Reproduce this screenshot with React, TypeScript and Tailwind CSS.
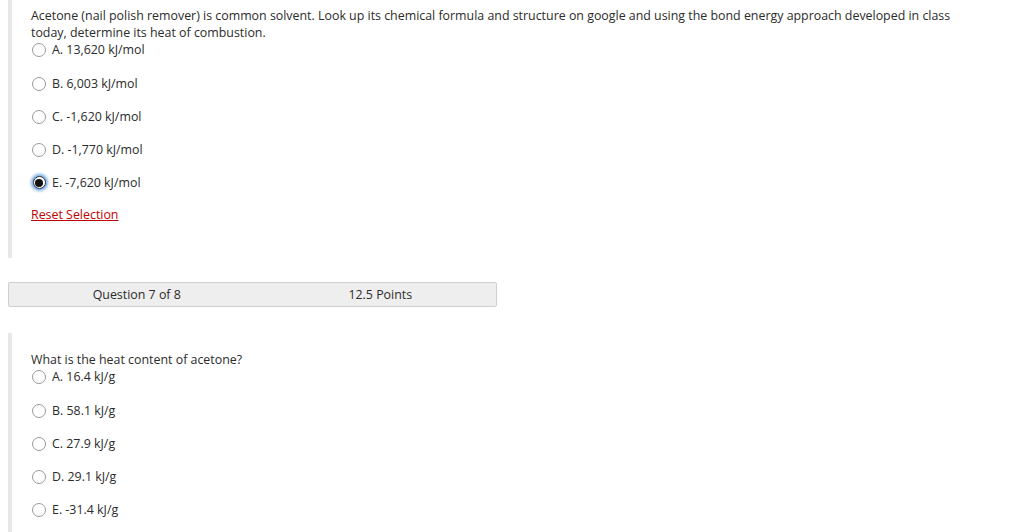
import React from "react";

function Radio({ checked }: { checked?: boolean }) {
  if (checked) {
    return (
      <span className="relative inline-flex h-[13px] w-[13px] shrink-0 items-center justify-center rounded-full border border-[#333] bg-white shadow-[0_0_3px_2px_rgba(70,140,220,0.75)]">
        <span className="h-[8px] w-[8px] rounded-full bg-[#111]" />
      </span>
    );
  }
  return (
    <span className="inline-block h-[14px] w-[14px] shrink-0 rounded-full border border-[#9a9a9a] bg-white" />
  );
}

function Option({ label, checked, idx }: { label: string; checked?: boolean; idx: number }) {
  const mt = idx === 0 ? "" : idx === 1 ? "mt-[17px]" : "mt-[16px]";
  return (
    <div className={`flex h-[17px] items-center ${mt}`}>
      <span className="ml-[1px] flex w-[14px] items-center justify-center">
        <Radio checked={checked} />
      </span>
      <span className="ml-[6px]">{label}</span>
    </div>
  );
}

export default function App() {
  const q1 = ["A. 13,620 kJ/mol", "B. 6,003 kJ/mol", "C. -1,620 kJ/mol", "D. -1,770 kJ/mol", "E. -7,620 kJ/mol"];
  const q2 = ["A. 16.4 kJ/g", "B. 58.1 kJ/g", "C. 27.9 kJ/g", "D. 29.1 kJ/g", "E. -31.4 kJ/g"];
  return (
    <div
      className="h-[532px] w-[1024px] overflow-hidden bg-white text-[12.4px] leading-[17px] text-[#2b2b2b]"
      style={{ fontFamily: '"Open Sans", "Noto Sans", sans-serif' }}
    >
      <div className="ml-[8px] border-l-4 border-[#e8e8e8] pb-[35px] pl-[19px] pt-[7px]">
        <div className="w-[945px]">
          Acetone (nail polish remover) is common solvent. Look up its chemical formula and structure on google and using the bond energy approach developed in class today, determine its heat of combustion.
        </div>
        {q1.map((l, i) => (
          <Option key={l} label={l} idx={i} checked={i === 4} />
        ))}
        <div className="mt-[15px]">
          <a href="#" className="text-[#c00000] underline">
            Reset Selection
          </a>
        </div>
      </div>

      <div className="ml-[8px] mt-[24px] grid h-[25px] w-[489px] grid-cols-2 items-center rounded-[2px] border border-[#cfcfcf] bg-[#eeeeee]">
        <div className="pl-[12px] text-center">Question 7 of 8</div>
        <div className="pl-[12px] text-center">12.5 Points</div>
      </div>

      <div className="ml-[8px] mt-[26px] h-[300px] border-l-4 border-[#e8e8e8] pl-[19px] pt-[18px]">
        <div>What is the heat content of acetone?</div>
        {q2.map((l, i) => (
          <Option key={l} label={l} idx={i} />
        ))}
      </div>
    </div>
  );
}
